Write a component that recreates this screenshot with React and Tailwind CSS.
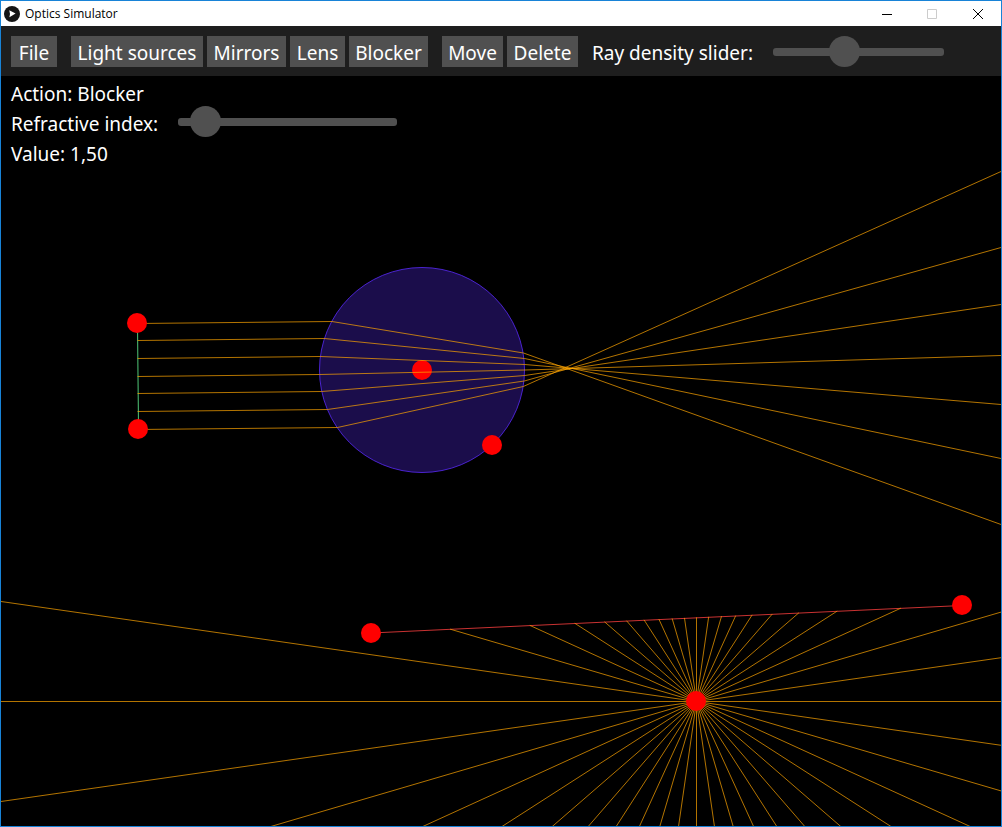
import { useState } from "react";

const SOURCE = { x: 696.5, y: 701.5 };
const RAY_COUNT = 44;
const MIRROR = { x1: 371, y1: 633, x2: 962, y2: 605.5 };
const FAR = 4000;

// Each beam ray: emitter height, lens entry, lens exit, and a later point along the exit direction.
const BEAM = [
  { y: 323.5, entry: [332, 321.5], exit: [523.5, 353], edge: [1001, 524.5] },
  { y: 340.5, entry: [324.5, 338.5], exit: [524.5, 358.5], edge: [1001, 458.5] },
  { y: 358.5, entry: [320.5, 356.5], exit: [524.8, 364.5], edge: [1001, 404.5] },
  { y: 376.5, entry: [319.5, 374.5], exit: [525, 370], edge: [1001, 355.5] },
  { y: 393.5, entry: [321.5, 391.5], exit: [524.8, 375.5], edge: [1001, 304.5] },
  { y: 411.5, entry: [327.5, 409.5], exit: [524.3, 381], edge: [1001, 247.5] },
  { y: 429.5, entry: [337.5, 427.5], exit: [523.3, 386.5], edge: [1001, 171.5] },
];

function beamPath({ y, entry, exit, edge }) {
  const k = FAR / (edge[0] - exit[0]);
  const endX = exit[0] + (edge[0] - exit[0]) * k;
  const endY = exit[1] + (edge[1] - exit[1]) * k;
  return `M137.5 ${y}L${entry[0]} ${entry[1]}L${exit[0]} ${exit[1]}L${endX} ${endY}`;
}

function sourceRay(index) {
  const angle = (index * 2 * Math.PI) / RAY_COUNT;
  const dx = Math.cos(angle);
  const dy = Math.sin(angle);
  const mx = MIRROR.x2 - MIRROR.x1;
  const my = MIRROR.y2 - MIRROR.y1;
  const det = mx * dy - my * dx;
  const ox = SOURCE.x - MIRROR.x1;
  const oy = SOURCE.y - MIRROR.y1;
  const t = (my * ox - mx * oy) / det;
  const u = (dy * ox - dx * oy) / det;
  const length = t > 0 && u >= 0 && u <= 1 ? t : FAR;
  return { x2: SOURCE.x + dx * length, y2: SOURCE.y + dy * length };
}

function Handle({ x, y }) {
  return <circle cx={x} cy={y} r="10" fill="#ff0000" />;
}

function Scene() {
  return (
    <svg className="absolute inset-0 h-full w-full" role="img" aria-label="Optical bench">
      <g transform="translate(-1 -76)" fill="none" strokeWidth="1">
        <circle cx="422" cy="370" r="102.5" fill="#1b0d4b" stroke="#4a23cf" />
        <Handle x={422} y={370} />
        <Handle x={492} y={445} />
        <line x1="137.5" y1="323" x2="138.5" y2="429" stroke="#50c878" />
        <g stroke="#ffa500" strokeOpacity="0.7">
          {BEAM.map((ray) => (
            <path key={ray.y} d={beamPath(ray)} />
          ))}
        </g>
        <line {...MIRROR} stroke="#c83232" />
        <g stroke="#ffa500" strokeOpacity="0.7" strokeLinecap="square">
          {Array.from({ length: RAY_COUNT }, (_, i) => (
            <line key={i} x1={SOURCE.x} y1={SOURCE.y} {...sourceRay(i)} />
          ))}
        </g>
        <Handle x={137} y={323} />
        <Handle x={138} y={429} />
        <Handle x={371} y={633} />
        <Handle x={962} y={605} />
        <Handle x={696} y={701} />
      </g>
    </svg>
  );
}

function ToolButton({ className, children }) {
  return (
    <button
      type="button"
      className={"h-[31px] bg-[#505050] pt-1 text-center leading-[27px] whitespace-nowrap hover:bg-[#606060] " + className}
    >
      {children}
    </button>
  );
}

function Slider({ className, ...props }) {
  return (
    <input
      type="range"
      className={
        "h-[31px] appearance-none bg-transparent " +
        "[&::-webkit-slider-runnable-track]:h-2 [&::-webkit-slider-runnable-track]:rounded-[3px] [&::-webkit-slider-runnable-track]:bg-[#505050] " +
        "[&::-webkit-slider-thumb]:-mt-3 [&::-webkit-slider-thumb]:size-[31px] [&::-webkit-slider-thumb]:appearance-none [&::-webkit-slider-thumb]:rounded-full [&::-webkit-slider-thumb]:bg-[#505050] " +
        className
      }
      {...props}
    />
  );
}

function TitleBar() {
  return (
    <header className="flex h-[25px] shrink-0 items-center bg-white pl-[3px] font-['Open_Sans',sans-serif] text-xs text-black">
      <svg className="size-4" viewBox="0 0 16 16" aria-hidden="true">
        <circle cx="8" cy="8" r="8" fill="#141414" />
        <path d="M5.3 4.3 11.6 7.6 5.4 11.2 6 8z" fill="#fff" />
      </svg>
      <h1 className="ml-[5px] flex-1">Optics Simulator</h1>
      <button type="button" aria-label="Minimize" className="flex h-full w-11 items-center justify-center">
        <svg className="size-[10px]" viewBox="0 0 10 10" aria-hidden="true">
          <path d="M0 5.5h10" stroke="#000" />
        </svg>
      </button>
      <button type="button" aria-label="Maximize" disabled className="flex h-full w-[46px] items-center justify-center">
        <svg className="size-[10px]" viewBox="0 0 10 10" aria-hidden="true">
          <path d="M.5.5h9v9h-9z" fill="none" stroke="#ccc" />
        </svg>
      </button>
      <button type="button" aria-label="Close" className="flex h-full w-[46px] items-center justify-center">
        <svg className="size-[10px]" viewBox="0 0 10 10" aria-hidden="true">
          <path d="m0 0 10 10M10 0 0 10" stroke="#000" />
        </svg>
      </button>
    </header>
  );
}

export default function App() {
  const [density, setDensity] = useState(40);
  const [index, setIndex] = useState(1.5);

  return (
    <div className="flex min-h-screen flex-col border border-[#1883d7] bg-black font-['Noto_Sans',sans-serif] text-[19px] text-white">
      <TitleBar />
      <div className="flex h-[50px] shrink-0 items-start bg-[#1e1e1e] px-[10px] pt-[10px]">
        <div className="flex gap-[14px]">
          <ToolButton className="w-[46px]">File</ToolButton>
          <div className="flex gap-1">
            <ToolButton className="w-[132px]">Light sources</ToolButton>
            <ToolButton className="w-[79px]">Mirrors</ToolButton>
            <ToolButton className="w-[55px]">Lens</ToolButton>
            <ToolButton className="w-[79px]">Blocker</ToolButton>
          </div>
          <div className="flex gap-1">
            <ToolButton className="w-[61px]">Move</ToolButton>
            <ToolButton className="w-[71px]">Delete</ToolButton>
          </div>
          <label htmlFor="density" className="w-[161px] pt-1 leading-[27px] whitespace-nowrap">
            Ray density slider:
          </label>
        </div>
        <Slider
          id="density"
          className="ml-5 w-[171px]"
          min="0"
          max="100"
          value={density}
          onChange={(e) => setDensity(Number(e.target.value))}
        />
      </div>
      <main className="relative flex-1 overflow-hidden">
        <Scene />
        <div className="relative px-[10px] pt-[3px] leading-[30px]">
          <p>Action: Blocker</p>
          <div className="flex h-[30px] items-center">
            <label htmlFor="refraction">Refractive index:</label>
            <Slider
              id="refraction"
              className="mb-[5px] ml-5 w-[219px]"
              min="1.4"
              max="3"
              step="0.01"
              value={index}
              onChange={(e) => setIndex(Number(e.target.value))}
            />
          </div>
          <p>Value: {index.toFixed(2).replace(".", ",")}</p>
        </div>
      </main>
    </div>
  );
}
